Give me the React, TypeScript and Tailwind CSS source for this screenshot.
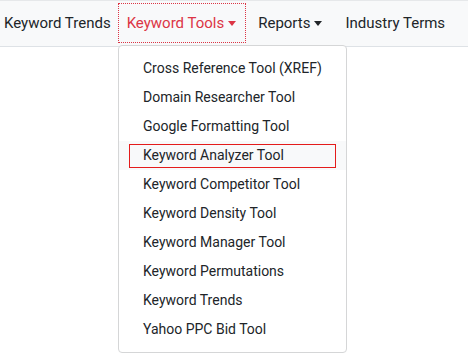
import React from "react";

const TOOLS = [
  "Cross Reference Tool (XREF)",
  "Domain Researcher Tool",
  "Google Formatting Tool",
  "Keyword Analyzer Tool",
  "Keyword Competitor Tool",
  "Keyword Density Tool",
  "Keyword Manager Tool",
  "Keyword Permutations",
  "Keyword Trends",
  "Yahoo PPC Bid Tool",
];

function Caret() {
  return (
    <span className="ml-[4px] inline-block h-0 w-0 border-x-4 border-t-[5px] border-x-transparent border-t-current" />
  );
}

export default function App() {
  return (
    <div
      className="relative h-[360px] w-[468px] overflow-hidden bg-white text-[#212529]"
      style={{ fontFamily: "Roboto, 'Liberation Sans', sans-serif" }}
    >
      <nav className="flex h-[47px] items-center whitespace-nowrap border-t border-b border-[#e6e8ea] border-b-[#dee2e6] bg-[#f8f9fa] pl-[4px] text-[15px]">
        <a className="shrink-0 py-2 pr-[7px]">Keyword Trends</a>
        <a className="mt-[-1px] flex h-[40px] shrink-0 items-center border border-dotted border-[#dc3545] pl-[8px] pr-[9px] text-[#dc3545]">
          Keyword Tools
          <Caret />
        </a>
        <a className="flex shrink-0 items-center pl-[12px] pr-[12px]">
          Reports
          <Caret />
        </a>
        <a className="shrink-0 pl-[11px]">Industry Terms</a>
      </nav>

      <div className="absolute left-[118px] top-[45px] w-[229px] whitespace-nowrap rounded-[4px] border border-[#d5d6d7] bg-white py-[8px] text-[14px]">
        {TOOLS.map((t) => {
          const active = t === "Keyword Analyzer Tool";
          return (
            <div
              key={t}
              className={
                active
                  ? "flex h-[29px] items-center bg-[#f8f9fa] px-[10px]"
                  : "flex h-[29px] items-center px-[10px]"
              }
            >
              <span
                className={
                  active
                    ? "flex h-[24px] w-full items-center border border-[#e41b1b] pl-[13px]"
                    : "flex h-[24px] w-full items-center border border-transparent pl-[13px]"
                }
              >
                {t}
              </span>
            </div>
          );
        })}
      </div>
    </div>
  );
}
